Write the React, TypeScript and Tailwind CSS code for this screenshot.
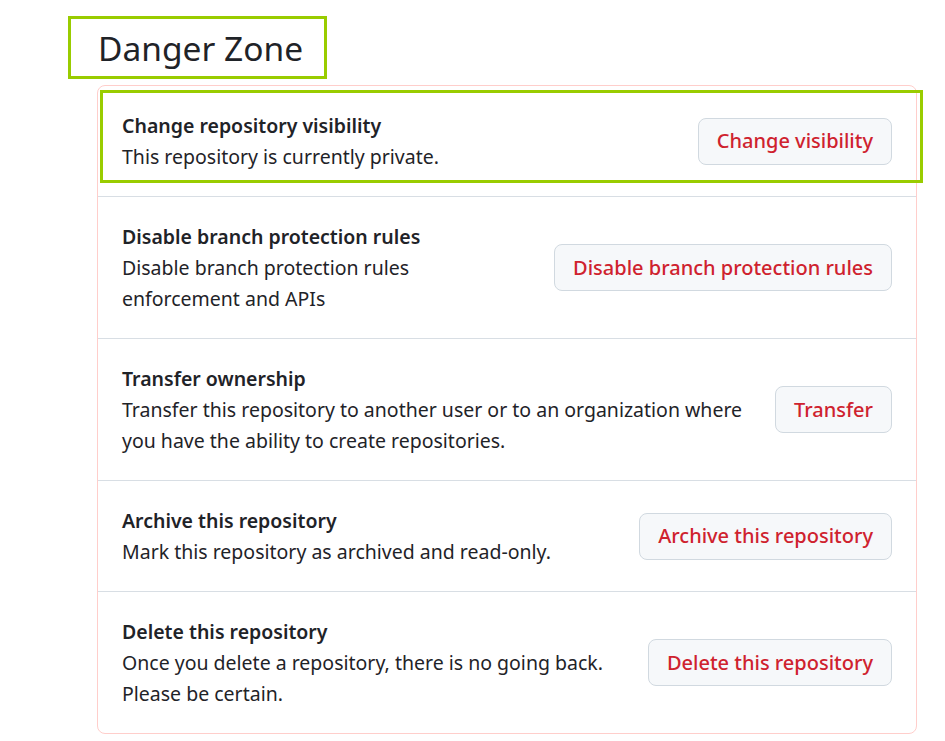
import React from "react";

type Row = { title: string; desc: React.ReactNode; button: string };

const rows: Row[] = [
  { title: "Change repository visibility", desc: <>This repository is currently private.</>, button: "Change visibility" },
  {
    title: "Disable branch protection rules",
    desc: (
      <>
        Disable branch protection rules
        <br />
        enforcement and APIs
      </>
    ),
    button: "Disable branch protection rules",
  },
  {
    title: "Transfer ownership",
    desc: (
      <>
        Transfer this repository to another user or to an organization where
        <br />
        you have the ability to create repositories.
      </>
    ),
    button: "Transfer",
  },
  { title: "Archive this repository", desc: <>Mark this repository as archived and read-only.</>, button: "Archive this repository" },
  {
    title: "Delete this repository",
    desc: (
      <>
        Once you delete a repository, there is no going back.
        <br />
        Please be certain.
      </>
    ),
    button: "Delete this repository",
  },
];

export default function App() {
  return (
    <div
      className="relative w-[945px] h-[741px] bg-white text-[#1f2328] overflow-hidden"
      style={{ fontFamily: '"Noto Sans", "Open Sans", sans-serif' }}
    >
      <div className="pl-[97px] pr-[28px]">
        <h2 className="pt-[27px] h-[85px] text-[33.5px] leading-[42px] font-normal pl-[1px]">Danger Zone</h2>
        <div className="border border-[#ffcecb] rounded-[8px]">
          {rows.map((r, i) => (
            <div
              key={r.title}
              className={`flex items-center justify-between gap-4 px-[24px] py-[24px] ${i > 0 ? "border-t border-[#d8dee4]" : ""}`}
            >
              <div>
                <div className="text-[19.5px] leading-[31px] font-semibold">{r.title}</div>
                <div className="text-[19.5px] leading-[31px]">{r.desc}</div>
              </div>
              <button className="shrink-0 h-[47px] px-[18px] rounded-[8px] border border-[#d1d9e0] bg-[#f6f8fa] text-[#cf222e] text-[20px] font-medium">
                {r.button}
              </button>
            </div>
          ))}
        </div>
      </div>
      <div className="absolute left-[68px] top-[16px] w-[259px] h-[63px] border-[3px] border-[#99cc00]" />
      <div className="absolute left-[100px] top-[90px] w-[823px] h-[93px] border-[3px] border-[#99cc00]" />
    </div>
  );
}
